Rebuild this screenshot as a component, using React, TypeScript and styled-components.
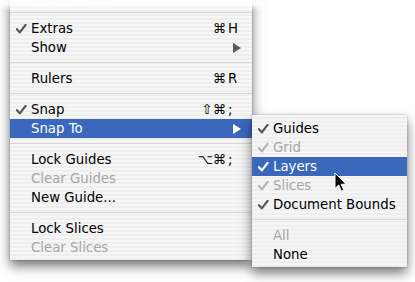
import styled, { createGlobalStyle } from "styled-components";

type Item =
  | { kind: "sep" }
  | {
      kind?: "item";
      label: string;
      checked?: boolean;
      disabled?: boolean;
      active?: boolean;
      mods?: string;
      keyChar?: string;
      submenu?: boolean;
      faded?: boolean;
    };

const mainItems: Item[] = [
  { label: "Screen Mode", submenu: true, faded: true },
  { kind: "sep" },
  { label: "Extras", checked: true, mods: "⌘", keyChar: "H" },
  { label: "Show", submenu: true },
  { kind: "sep" },
  { label: "Rulers", mods: "⌘", keyChar: "R" },
  { kind: "sep" },
  { label: "Snap", checked: true, mods: "⇧⌘", keyChar: ";" },
  { label: "Snap To", submenu: true, active: true },
  { kind: "sep" },
  { label: "Lock Guides", mods: "⌥⌘", keyChar: ";" },
  { label: "Clear Guides", disabled: true },
  { label: "New Guide..." },
  { kind: "sep" },
  { label: "Lock Slices" },
  { label: "Clear Slices", disabled: true },
];

const subItems: Item[] = [
  { label: "Guides", checked: true },
  { label: "Grid", checked: true, disabled: true },
  { label: "Layers", checked: true, active: true },
  { label: "Slices", checked: true, disabled: true },
  { label: "Document Bounds", checked: true },
  { kind: "sep" },
  { label: "All", disabled: true },
  { label: "None" },
];

const GlobalStyle = createGlobalStyle`
  html, body {
    margin: 0;
    padding: 0;
    background: #ffffff;
    overflow: hidden;
  }
  body {
    font-family: "DejaVu Sans", "Liberation Sans", sans-serif;
  }
`;

const Page = styled.div`
  width: 415px;
  height: 282px;
  display: flex;
  align-items: flex-start;
  padding-left: 10px;
  box-sizing: border-box;
  position: relative;
  overflow: hidden;
`;

const Menu = styled.div<{ $width: number; $top: number }>`
  position: relative;
  width: ${(p) => p.$width}px;
  margin-top: ${(p) => p.$top}px;
  padding: 4px 0 3px;
  background: repeating-linear-gradient(
    to bottom,
    #f6f6f6 0px,
    #f6f6f6 2px,
    #eeeeee 2px,
    #eeeeee 4px
  );
  box-shadow: 0 6px 11px rgba(0, 0, 0, 0.55), 0 0 2px rgba(0, 0, 0, 0.25);
  font-size: 13.3px;
  color: #000;
`;

const TopFade = styled.div`
  position: absolute;
  left: -12px;
  right: -12px;
  top: 0;
  height: 27px;
  background: linear-gradient(
    to bottom,
    rgba(255, 255, 255, 1) 0%,
    rgba(255, 255, 255, 0.85) 75%,
    rgba(255, 255, 255, 0) 100%
  );
  pointer-events: none;
`;

const Row = styled.div<{ $active?: boolean; $disabled?: boolean }>`
  display: flex;
  align-items: center;
  height: 19px;
  line-height: 19px;
  padding: 0 10px 0 6px;
  white-space: nowrap;
  background: ${(p) => (p.$active ? "#3b68bd" : "transparent")};
  color: ${(p) => (p.$active ? "#ffffff" : p.$disabled ? "#a6a6a6" : "#000000")};
`;

const CheckCell = styled.span`
  width: 15px;
  height: 19px;
  display: flex;
  align-items: center;
  flex-shrink: 0;
`;

const Label = styled.span`
  flex: 1;
`;

const Mods = styled.span`
  text-align: right;
`;

const KeyChar = styled.span`
  width: 14px;
  margin-left: 2px;
`;

const Arrow = styled.svg`
  margin-right: 1px;
  display: block;
`;

const Separator = styled.div`
  height: 12px;
  &::before {
    content: "";
    display: block;
    position: relative;
    top: 5px;
    height: 1px;
    background: #d6d6d6;
  }
`;

const Cursor = styled.svg`
  position: absolute;
  left: 82px;
  top: 57px;
`;

const Check = ({ color }: { color: string }) => (
  <svg width="11" height="10" viewBox="0 0 11 10">
    <path
      d="M1 5.2 L3.8 8.4 L9.6 0.8"
      fill="none"
      stroke={color}
      strokeWidth="2.2"
      strokeLinecap="round"
      strokeLinejoin="round"
    />
  </svg>
);

const MenuList = ({ items }: { items: Item[] }) => (
  <>
    {items.map((item, i) => {
      if (item.kind === "sep") return <Separator key={i} />;
      const checkColor = item.active ? "#ffffff" : item.disabled ? "#b4b4b4" : "#555555";
      const arrowColor = item.active ? "#ffffff" : item.faded ? "#dddddd" : "#5a5a5a";
      return (
        <Row
          key={i}
          $active={item.active}
          $disabled={item.disabled}
          style={item.faded ? { color: "#c8c8c8" } : undefined}
        >
          <CheckCell>{item.checked && <Check color={checkColor} />}</CheckCell>
          <Label>{item.label}</Label>
          {item.keyChar && (
            <>
              <Mods>{item.mods}</Mods>
              <KeyChar>{item.keyChar}</KeyChar>
            </>
          )}
          {item.submenu && (
            <Arrow width="8" height="10" viewBox="0 0 8 10">
              <path d="M0 0 L8 5 L0 10 Z" fill={arrowColor} />
            </Arrow>
          )}
        </Row>
      );
    })}
  </>
);

export default function App() {
  return (
    <>
      <GlobalStyle />
      <Page>
        <Menu $width={242} $top={-16}>
          <MenuList items={mainItems} />
          <TopFade />
        </Menu>
        <Menu $width={155} $top={115}>
          <MenuList items={subItems} />
          <Cursor width="14" height="21" viewBox="0 0 14 21">
            <path
              d="M1 1 L1 16.5 L4.7 13 L7.4 19.2 L9.8 18.2 L7.2 12.2 L12 12.2 Z"
              fill="#000"
              stroke="#fff"
              strokeWidth="1"
              strokeLinejoin="round"
            />
          </Cursor>
        </Menu>
      </Page>
    </>
  );
}
